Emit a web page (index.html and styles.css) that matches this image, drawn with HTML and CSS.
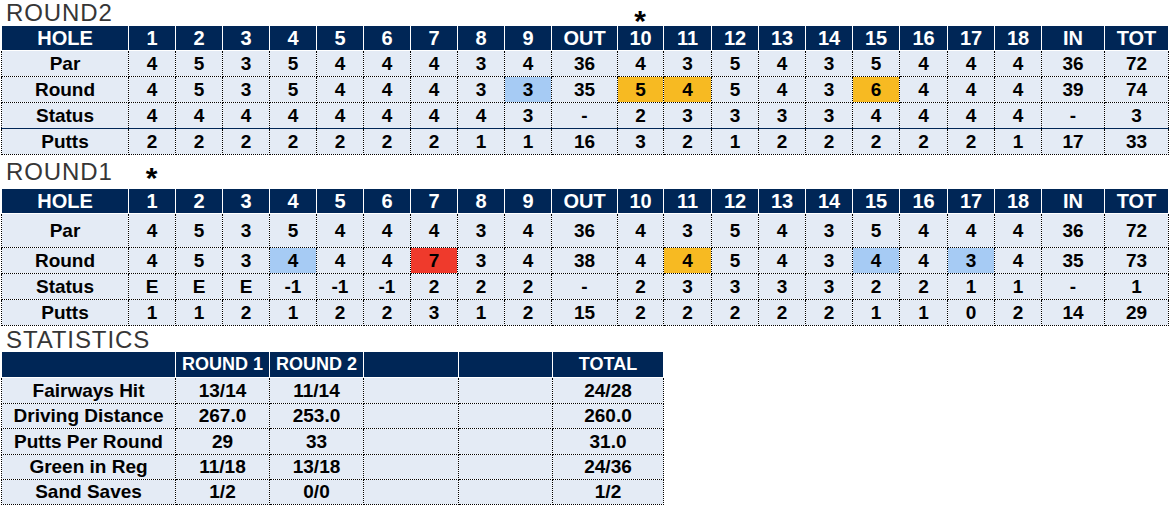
FILE: index.html
```html
<!DOCTYPE html>
<html>
<head>
<meta charset="utf-8">
<link rel="stylesheet" href="styles.css">
</head>
<body>
<div class="page">
  <div class="title-row r2">
    <div class="title">ROUND2</div>
    <div class="star col10">*</div>
  </div>
  <table class="score">
    <colgroup>
      <col class="c-hole"><col class="c-n"><col class="c-n"><col class="c-n"><col class="c-n"><col class="c-n"><col class="c-n"><col class="c-n"><col class="c-n"><col class="c-n">
      <col class="c-out"><col class="c-a"><col class="c-b"><col class="c-n"><col class="c-n"><col class="c-n"><col class="c-n"><col class="c-b"><col class="c-n"><col class="c-n">
      <col class="c-in"><col class="c-tot">
    </colgroup>
    <tr class="head"><td>HOLE</td><td>1</td><td>2</td><td>3</td><td>4</td><td>5</td><td>6</td><td>7</td><td>8</td><td>9</td><td>OUT</td><td>10</td><td>11</td><td>12</td><td>13</td><td>14</td><td>15</td><td>16</td><td>17</td><td>18</td><td>IN</td><td>TOT</td></tr>
    <tr class="row"><td>Par</td><td>4</td><td>5</td><td>3</td><td>5</td><td>4</td><td>4</td><td>4</td><td>3</td><td>4</td><td>36</td><td>4</td><td>3</td><td>5</td><td>4</td><td>3</td><td>5</td><td>4</td><td>4</td><td>4</td><td>36</td><td>72</td></tr>
    <tr class="row"><td>Round</td><td>4</td><td>5</td><td>3</td><td>5</td><td>4</td><td>4</td><td>4</td><td>3</td><td class="birdie">3</td><td>35</td><td class="bogey">5</td><td class="bogey">4</td><td>5</td><td>4</td><td>3</td><td class="bogey">6</td><td>4</td><td>4</td><td>4</td><td>39</td><td>74</td></tr>
    <tr class="row"><td>Status</td><td>4</td><td>4</td><td>4</td><td>4</td><td>4</td><td>4</td><td>4</td><td>4</td><td>3</td><td>-</td><td>2</td><td>3</td><td>3</td><td>3</td><td>3</td><td>4</td><td>4</td><td>4</td><td>4</td><td>-</td><td>3</td></tr>
    <tr class="row split"><td>Putts</td><td>2</td><td>2</td><td>2</td><td>2</td><td>2</td><td>2</td><td>2</td><td>1</td><td>1</td><td>16</td><td>3</td><td>2</td><td>1</td><td>2</td><td>2</td><td>2</td><td>2</td><td>2</td><td>1</td><td>17</td><td>33</td></tr>
  </table>

  <div class="title-row r1">
    <div class="title">ROUND1</div>
    <div class="star col1">*</div>
  </div>
  <table class="score">
    <colgroup>
      <col class="c-hole"><col class="c-n"><col class="c-n"><col class="c-n"><col class="c-n"><col class="c-n"><col class="c-n"><col class="c-n"><col class="c-n"><col class="c-n">
      <col class="c-out"><col class="c-a"><col class="c-b"><col class="c-n"><col class="c-n"><col class="c-n"><col class="c-n"><col class="c-b"><col class="c-n"><col class="c-n">
      <col class="c-in"><col class="c-tot">
    </colgroup>
    <tr class="head"><td>HOLE</td><td>1</td><td>2</td><td>3</td><td>4</td><td>5</td><td>6</td><td>7</td><td>8</td><td>9</td><td>OUT</td><td>10</td><td>11</td><td>12</td><td>13</td><td>14</td><td>15</td><td>16</td><td>17</td><td>18</td><td>IN</td><td>TOT</td></tr>
    <tr class="row tall"><td>Par</td><td>4</td><td>5</td><td>3</td><td>5</td><td>4</td><td>4</td><td>4</td><td>3</td><td>4</td><td>36</td><td>4</td><td>3</td><td>5</td><td>4</td><td>3</td><td>5</td><td>4</td><td>4</td><td>4</td><td>36</td><td>72</td></tr>
    <tr class="row"><td>Round</td><td>4</td><td>5</td><td>3</td><td class="birdie">4</td><td>4</td><td>4</td><td class="double">7</td><td>3</td><td>4</td><td>38</td><td>4</td><td class="bogey">4</td><td>5</td><td>4</td><td>3</td><td class="birdie">4</td><td>4</td><td class="birdie">3</td><td>4</td><td>35</td><td>73</td></tr>
    <tr class="row"><td>Status</td><td>E</td><td>E</td><td>E</td><td>-1</td><td>-1</td><td>-1</td><td>2</td><td>2</td><td>2</td><td>-</td><td>2</td><td>3</td><td>3</td><td>3</td><td>3</td><td>2</td><td>2</td><td>1</td><td>1</td><td>-</td><td>1</td></tr>
    <tr class="row"><td>Putts</td><td>1</td><td>1</td><td>2</td><td>1</td><td>2</td><td>2</td><td>3</td><td>1</td><td>2</td><td>15</td><td>2</td><td>2</td><td>2</td><td>2</td><td>2</td><td>1</td><td>1</td><td>0</td><td>2</td><td>14</td><td>29</td></tr>
  </table>

  <div class="title-row rs">
    <div class="title">STATISTICS</div>
  </div>
  <table class="stats">
    <colgroup>
      <col class="s-label"><col class="s-r"><col class="s-r"><col class="s-e"><col class="s-r"><col class="s-tot">
    </colgroup>
    <tr class="head"><td></td><td>ROUND 1</td><td>ROUND 2</td><td></td><td></td><td>TOTAL</td></tr>
    <tr class="row hi"><td>Fairways Hit</td><td>13/14</td><td>11/14</td><td></td><td></td><td>24/28</td></tr>
    <tr class="row lo"><td>Driving Distance</td><td>267.0</td><td>253.0</td><td></td><td></td><td>260.0</td></tr>
    <tr class="row hi"><td>Putts Per Round</td><td>29</td><td>33</td><td></td><td></td><td>31.0</td></tr>
    <tr class="row lo"><td>Green in Reg</td><td>11/18</td><td>13/18</td><td></td><td></td><td>24/36</td></tr>
    <tr class="row lo"><td>Sand Saves</td><td>1/2</td><td>0/0</td><td></td><td></td><td>1/2</td></tr>
  </table>
</div>
</body>
</html>
```

FILE: styles.css
```css
html, body {
  margin: 0;
  padding: 0;
  background: #ffffff;
}

.page {
  padding-left: 1px;
  font-family: "Liberation Sans", Arial, sans-serif;
  color: #000;
}

.title-row {
  display: grid;
  grid-template-columns: 127px repeat(9, 47px) 66px 46px 48px 47px 47px 47px 47px 48px 47px 47px 63px 64px;
  align-items: start;
}

.r2 { height: 25px; }
.r1 { height: 33px; }
.rs { height: 25px; }

.title {
  grid-column: 1 / span 3;
  grid-row: 1;
  font-size: 24px;
  letter-spacing: 0.9px;
  line-height: 26px;
  color: #363636;
  padding-left: 5px;
}

.r1 .title { padding-top: 4px; }
.rs .title { margin-top: 1px; }

.star {
  grid-row: 1;
  text-align: center;
  font-weight: bold;
  font-size: 30px;
  line-height: 20px;
  height: 14px;
}

.r2 .star { padding-top: 11px; }
.r1 .star { padding-top: 13px; }

.col10 { grid-column: 12; }
.col1 { grid-column: 2; }

table {
  border-collapse: collapse;
  table-layout: fixed;
}

.score { width: 1167px; }
.stats { width: 662px; }

.c-hole { width: 127px; }
.c-n { width: 47px; }
.c-a { width: 46px; }
.c-b { width: 48px; }
.c-out { width: 66px; }
.c-in { width: 63px; }
.c-tot { width: 64px; }

.s-label { width: 174px; }
.s-r { width: 94px; }
.s-e { width: 95px; }
.s-tot { width: 111px; }

td {
  border: 1px dotted #000;
  text-align: center;
  vertical-align: middle;
  padding: 0;
  font-weight: bold;
  white-space: nowrap;
  overflow: hidden;
}

.head td {
  background: #002656;
  color: #fff;
  border-color: #ffffff;
  height: 24px;
  font-size: 20px;
}

.stats .head td {
  font-size: 18px;
  height: 25px;
}

.row td {
  background: #e4ebf5;
  height: 25px;
  font-size: 19px;
}

.row.tall td { height: 33px; }

.stats .row.hi td { height: 25px; }
.stats .row.lo td { height: 24px; }

.split td { border-top: 1px solid #002656; }

.row td.birdie { background: #a6cbf4; }
.row td.bogey { background: #f7ba22; }
.row td.double { background: #ef3a2c; }
```
